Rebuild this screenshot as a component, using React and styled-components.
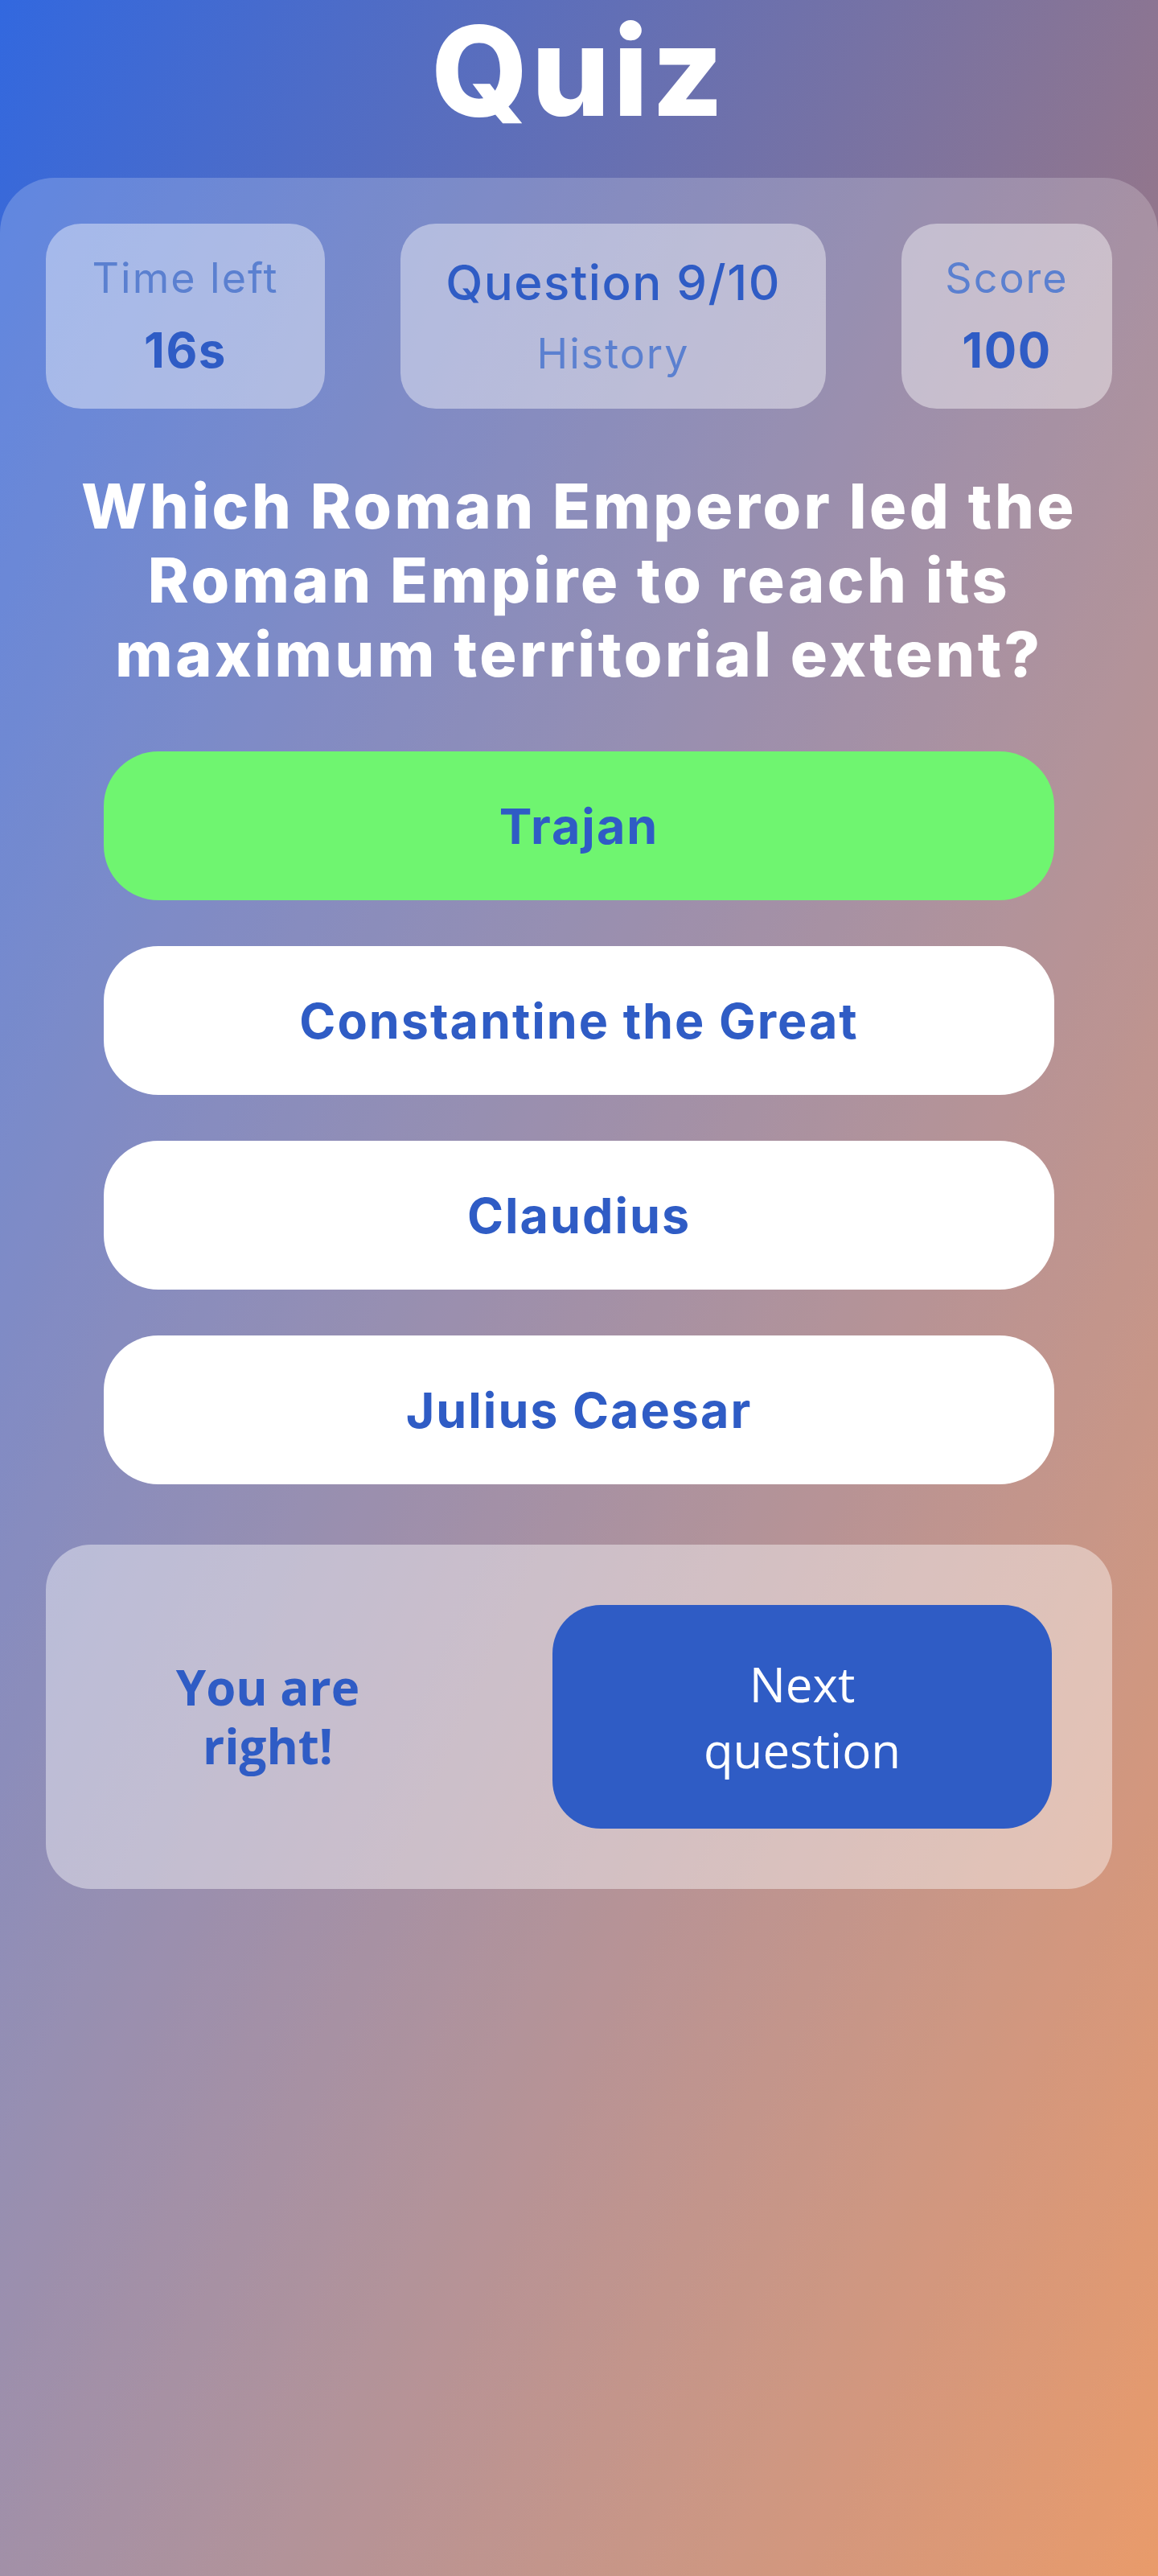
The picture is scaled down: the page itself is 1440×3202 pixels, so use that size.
import React from 'react';
import styled, { createGlobalStyle } from 'styled-components';

const Blue = '#2f5cc5';
const SoftBlue = '#5b80d0';

const GlobalStyle = createGlobalStyle`
  html, body {
    margin: 0;
    padding: 0;
  }
  body {
    font-family: Inter, "Open Sans", sans-serif;
  }
  * {
    box-sizing: border-box;
  }
`;

const stats = [
  { label: 'Time left', value: '16s', width: 347 },
  { label: 'History', value: 'Question 9/10', width: 529, top: true },
  { label: 'Score', value: '100', width: 262 },
];

const answers = [
  { text: 'Trajan', correct: true },
  { text: 'Constantine the Great' },
  { text: 'Claudius' },
  { text: 'Julius Caesar' },
];

export default function App() {
  return (
    <Page>
      <GlobalStyle />
      <Title>Quiz</Title>
      <Panel>
        <StatsRow>
          {stats.map((s) => (
            <StatBox key={s.label} $width={s.width}>
              {s.top ? (
                <>
                  <StatValue $weight={500}>{s.value}</StatValue>
                  <StatLabel>{s.label}</StatLabel>
                </>
              ) : (
                <>
                  <StatLabel>{s.label}</StatLabel>
                  <StatValue>{s.value}</StatValue>
                </>
              )}
            </StatBox>
          ))}
        </StatsRow>

        <Question>
          Which Roman Emperor led the Roman Empire to reach its maximum territorial extent?
        </Question>

        <AnswerList>
          {answers.map((a) => (
            <Answer key={a.text} $correct={a.correct}>
              {a.text}
            </Answer>
          ))}
        </AnswerList>

        <Feedback>
          <Message>
            <MessageText>You are right!</MessageText>
          </Message>
          <NextButton>Next question</NextButton>
        </Feedback>
      </Panel>
    </Page>
  );
}

const Page = styled.div`
  min-height: 100vh;
  display: flex;
  flex-direction: column;
  background: linear-gradient(to bottom right, #3268df, #e48246);
`;

const Title = styled.h1`
  margin: 0 0 56px;
  padding-top: 13px;
  height: 165px;
  font-size: 154px;
  line-height: 150px;
  font-weight: 800;
  color: #fff;
  text-align: center;
  letter-spacing: 4px;
`;

const Panel = styled.main`
  flex: 1;
  background: rgba(255, 255, 255, 0.2);
  border-radius: 68px 68px 0 0;
  padding: 57px 57px 0;
`;

const StatsRow = styled.div`
  display: flex;
  justify-content: space-between;
`;

const StatBox = styled.div`
  width: ${(p) => p.$width}px;
  height: 230px;
  border-radius: 44px;
  background: rgba(255, 255, 255, 0.42);
  display: flex;
  flex-direction: column;
  align-items: center;
  justify-content: center;
  gap: 20px;
`;

const StatLabel = styled.div`
  font-size: 52px;
  line-height: 64px;
  font-weight: 400;
  letter-spacing: 2px;
  color: ${SoftBlue};
`;

const StatValue = styled.div`
  font-size: 60px;
  line-height: 74px;
  font-weight: ${(p) => p.$weight || 700};
  letter-spacing: 1.5px;
  color: ${Blue};
`;

const Question = styled.h2`
  margin: 75px 0 0;
  font-size: 77px;
  line-height: 92px;
  font-weight: 800;
  letter-spacing: 3.5px;
  color: #fff;
  text-align: center;
`;

const AnswerList = styled.div`
  margin: 75px 72px 0;
  display: flex;
  flex-direction: column;
  gap: 57px;
`;

const Answer = styled.button`
  height: 185px;
  border: none;
  border-radius: 68px;
  background: ${(p) => (p.$correct ? '#6ff570' : '#ffffff')};
  color: ${Blue};
  font-family: Inter, sans-serif;
  font-size: 61px;
  font-weight: 700;
  letter-spacing: 2px;
  cursor: pointer;
`;

const Feedback = styled.div`
  margin-top: 75px;
  height: 428px;
  padding: 74px 75px;
  border-radius: 56px;
  background: rgba(255, 255, 255, 0.42);
  display: flex;
  align-items: center;
`;

const Message = styled.div`
  flex: 1;
  display: flex;
  justify-content: center;
`;

const MessageText = styled.p`
  margin: 0;
  max-width: 300px;
  font-family: "Open Sans", sans-serif;
  font-size: 60px;
  line-height: 73px;
  font-weight: 700;
  color: ${Blue};
  text-align: center;
`;

const NextButton = styled.button`
  margin-left: 153px;
  width: 621px;
  height: 278px;
  border: none;
  border-radius: 60px;
  background: ${Blue};
  color: #fff;
  font-family: "Open Sans", sans-serif;
  font-size: 60px;
  font-weight: 500;
  line-height: normal;
  padding: 0 150px;
  cursor: pointer;
`;
